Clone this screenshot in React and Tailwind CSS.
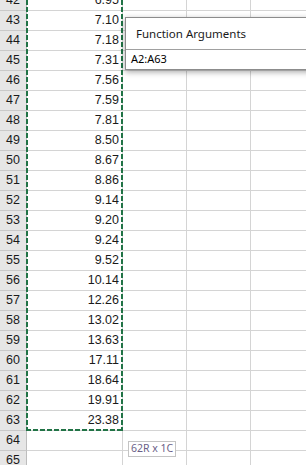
const values = [
  [42, "6.95"],
  [43, "7.10"],
  [44, "7.18"],
  [45, "7.31"],
  [46, "7.56"],
  [47, "7.59"],
  [48, "7.81"],
  [49, "8.50"],
  [50, "8.67"],
  [51, "8.86"],
  [52, "9.14"],
  [53, "9.20"],
  [54, "9.24"],
  [55, "9.52"],
  [56, "10.14"],
  [57, "12.26"],
  [58, "13.02"],
  [59, "13.63"],
  [60, "17.11"],
  [61, "18.64"],
  [62, "19.91"],
  [63, "23.38"],
  [64, ""],
  [65, ""],
];

export default function App() {
  return (
    <div
      className="relative w-[306px] h-[465px] overflow-hidden bg-white"
      style={{ fontFamily: "'Liberation Sans', Arial, sans-serif" }}
    >
      {/* Sheet rows */}
      <div className="mt-[-9px]">
        {values.map(([n, v]) => (
          <div key={n} className="flex h-[20px] text-[12.5px] text-[#1a1a1a]">
            <div className="w-[27px] shrink-0 bg-[#e6e6e6] border-r border-r-[#bdbdbd] border-b border-b-[#c9c9c9] flex items-center justify-center">
              {n}
            </div>
            <div className="w-[96px] shrink-0 border-r border-b border-[#d4d4d4] flex items-center justify-end pr-[3px]">
              {v}
            </div>
            <div className="w-[64px] shrink-0 border-r border-b border-[#d4d4d4]" />
            <div className="w-[64px] shrink-0 border-r border-b border-[#d4d4d4]" />
            <div className="flex-1 border-b border-[#d4d4d4]" />
          </div>
        ))}
      </div>

      {/* Copy / selection marquee */}
      <svg className="absolute left-0 top-0" width="306" height="465">
        <g stroke="#217346" strokeWidth="2" strokeDasharray="5 2" fill="none">
          <line x1="27" y1="0" x2="27" y2="431" />
          <line x1="122" y1="0" x2="122" y2="431" />
          <line x1="26" y1="430" x2="123" y2="430" />
        </g>
      </svg>

      {/* Function Arguments collapsed dialog */}
      <div className="absolute left-[125px] top-[17px] w-[200px] h-[53px] bg-white border border-[#8c8c8c] shadow-[0_2px_6px_rgba(0,0,0,0.35)]">
        <div
          className="h-[31px] pl-[10px] flex items-center text-[11.5px] text-[#1a1a1a]"
          style={{ fontFamily: "'Noto Sans', 'Open Sans', sans-serif" }}
        >
          Function Arguments
        </div>
        <div
          className="h-[20px] border-t border-[#a0a0a0] pl-[5px] flex items-center text-[11px] text-black"
          style={{ fontFamily: "'Noto Sans', 'Open Sans', sans-serif" }}
        >
          A2:A63
        </div>
      </div>

      {/* Selection size tooltip */}
      <div
        className="absolute left-[128px] top-[441px] h-[16px] px-[2px] bg-white border border-[#c4c4c4] flex items-center text-[10.5px] text-[#6b5f88]"
        style={{ fontFamily: "'Noto Sans', 'Open Sans', sans-serif" }}
      >
        62R x 1C
      </div>
    </div>
  );
}
